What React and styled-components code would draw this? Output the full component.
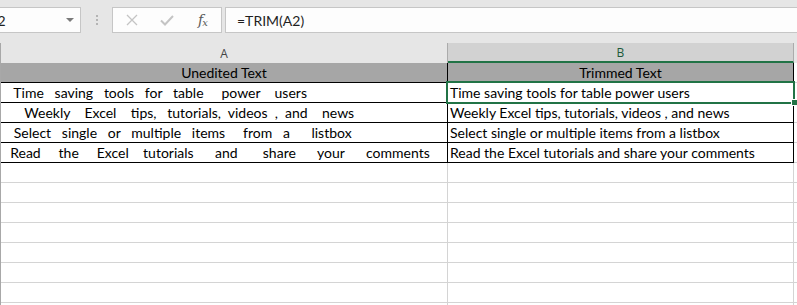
import React from 'react';
import styled, { createGlobalStyle } from 'styled-components';

const GlobalStyle = createGlobalStyle`
  html, body {
    margin: 0;
    padding: 0;
    background: #ffffff;
    overflow: hidden;
  }
`;

const rows = [
  { a: '   Time   saving   tools   for   table     power    users', b: 'Time saving tools for table power users' },
  { a: '      Weekly    Excel    tips,   tutorials,  videos  ,  and    news', b: 'Weekly Excel tips, tutorials, videos , and news' },
  { a: '   Select   single   or   multiple   items     from   a      listbox', b: 'Select single or multiple items from a listbox' },
  { a: '  Read     the     Excel    tutorials      and       share      your      comments', b: 'Read the Excel tutorials and share your comments' },
];

const EMPTY_ROWS = 8;

function App() {
  return (
    <Window>
      <GlobalStyle />
      <Toolbar>
        <NameBox>
          <NameText>A2</NameText>
          <DropArrow />
        </NameBox>
        <Grip>
          <Dot />
          <Dot />
          <Dot />
        </Grip>
        <FxBox>
          <FxButton>
            <svg width="12" height="12" viewBox="0 0 12 12">
              <path d="M1 1 L11 11 M11 1 L1 11" stroke="#c4c4c4" strokeWidth="1.3" fill="none" />
            </svg>
          </FxButton>
          <FxButton>
            <svg width="14" height="11" viewBox="0 0 14 11">
              <path d="M1 5.5 L5 9.5 L13 1" stroke="#c4c4c4" strokeWidth="2" fill="none" />
            </svg>
          </FxButton>
          <FxButton>
            <FxLabel>f<sub>x</sub></FxLabel>
          </FxButton>
        </FxBox>
        <FormulaBar>=TRIM(A2)</FormulaBar>
      </Toolbar>

      <Sheet>
        <ColHeader>A</ColHeader>
        <ColHeader selected>B</ColHeader>
        <ColHeader last />

        <Cell title="true" align="center">Unedited Text</Cell>
        <Cell title="true" align="center">Trimmed Text</Cell>
        <Cell last />

        {rows.map((r, i) => (
          <React.Fragment key={i}>
            <Cell>{r.a}</Cell>
            <Cell>
              {r.b}
              {i === 0 && (
                <>
                  <Selection />
                  <FillHandle />
                </>
              )}
            </Cell>
            <Cell last />
          </React.Fragment>
        ))}

        {Array.from({ length: EMPTY_ROWS }).map((_, i) => (
          <React.Fragment key={'e' + i}>
            <EmptyCell />
            <EmptyCell />
            <EmptyCell />
          </React.Fragment>
        ))}
      </Sheet>
    </Window>
  );
}

const Window = styled.div`
  width: 797px;
  height: 305px;
  overflow: hidden;
  background: #ffffff;
  font-family: Lato, "Liberation Sans", sans-serif;
`;

const Toolbar = styled.div`
  height: 43px;
  box-sizing: border-box;
  padding-top: 7px;
  background: #e6e6e6;
  display: flex;
  align-items: flex-start;
`;

const NameBox = styled.div`
  width: 81px;
  height: 26px;
  box-sizing: border-box;
  background: #fdfdfd;
  border: 1px solid #c6c6c6;
  border-left: none;
  padding-right: 6px;
  display: flex;
  align-items: center;
  justify-content: space-between;
  overflow: hidden;
`;

const NameText = styled.span`
  margin-left: -12px;
  font-size: 14px;
  color: #1f1f1f;
`;

const DropArrow = styled.span`
  width: 0;
  height: 0;
  border-left: 4px solid transparent;
  border-right: 4px solid transparent;
  border-top: 4px solid #7a7a7a;
`;

const Grip = styled.div`
  margin: 8px 14px 0 15px;
  display: flex;
  flex-direction: column;
  gap: 2px;
`;

const Dot = styled.span`
  width: 2px;
  height: 2px;
  background: #b4b4b4;
`;

const FxBox = styled.div`
  width: 110px;
  height: 26px;
  box-sizing: border-box;
  background: #fdfdfd;
  border: 1px solid #c6c6c6;
  padding-left: 1px;
  display: grid;
  grid-template-columns: 35px 35px 37px;
  align-items: center;
`;

const FxButton = styled.div`
  display: flex;
  justify-content: center;
  align-items: center;
`;

const FxLabel = styled.span`
  font-family: "DejaVu Serif", "Liberation Serif", serif;
  font-style: italic;
  font-size: 14px;
  color: #5a5a5a;
  letter-spacing: -1px;

  sub {
    font-size: 10px;
    vertical-align: -1px;
  }
`;

const FormulaBar = styled.div`
  flex: 1;
  margin-left: 3px;
  height: 26px;
  box-sizing: border-box;
  background: #fdfdfd;
  border: 1px solid #c6c6c6;
  border-right: none;
  padding-left: 11px;
  display: flex;
  align-items: center;
  font-size: 14px;
  color: #1f1f1f;
`;

const Sheet = styled.div`
  display: grid;
  grid-template-columns: 447px 346px 1fr;
  grid-auto-rows: 20px;
  border-left: 1px solid #a8a8a8;
`;

const ColHeader = styled.div`
  box-sizing: border-box;
  background: ${(p) => (p.selected ? '#d2d2d2' : '#e6e6e6')};
  border-right: ${(p) => (p.last ? 'none' : '1px solid #ababab')};
  border-bottom: ${(p) => (p.selected ? '2px solid #217346' : 'none')};
  display: flex;
  align-items: center;
  justify-content: center;
  font-family: "Open Sans", "Noto Sans", sans-serif;
  font-size: 12px;
  color: ${(p) => (p.selected ? '#1d5a3a' : '#444444')};
`;

const Cell = styled.div`
  position: relative;
  box-sizing: border-box;
  padding: 0 2px;
  background: ${(p) => (p.title && !p.last ? '#a6a6a6' : '#ffffff')};
  border-bottom: 1px solid ${(p) => (p.last ? '#d4d4d4' : '#000000')};
  border-right: ${(p) => (p.last ? 'none' : '1px solid #000000')};
  text-align: ${(p) => p.align || 'left'};
  white-space: pre;
  overflow: visible;
  font-size: 14px;
  line-height: 19px;
  color: #000000;
`;

const EmptyCell = styled.div`
  box-sizing: border-box;
  border-bottom: 1px solid #d4d4d4;
  border-right: 1px solid #d4d4d4;
`;

const Selection = styled.span`
  position: absolute;
  top: -2px;
  left: -2px;
  right: -2px;
  bottom: -2px;
  border: 2px solid #217346;
  z-index: 2;
  pointer-events: none;
`;

const FillHandle = styled.span`
  position: absolute;
  right: -5px;
  bottom: -4px;
  width: 5px;
  height: 5px;
  background: #217346;
  border: 1px solid #ffffff;
  z-index: 3;
`;

export default App;
